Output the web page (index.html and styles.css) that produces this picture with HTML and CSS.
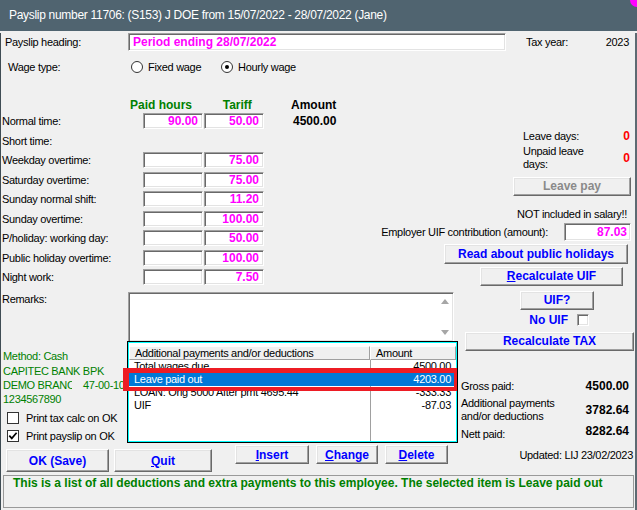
FILE: index.html
```html
<!DOCTYPE html>
<html lang="en">

<head>
    <meta charset="UTF-8">
    <meta name="viewport" content="width=device-width, initial-scale=1.0">
    <title>Payslip</title>
    <link rel="stylesheet" href="styles.css">
</head>

<body>
    <div class="window">
        <div class="titlebar">Payslip number 11706: (S153) J DOE from 15/07/2022 - 28/07/2022 (Jane)</div>

        <div class="form">
            <div class="heading-row">
                <span class="heading-label">Payslip heading:</span>
                <div class="field heading-field">Period ending 28/07/2022</div>
                <span class="tax-label">Tax year:</span>
                <span class="tax-value">2023</span>
            </div>

            <div class="wage-row">
                <span class="wage-label">Wage type:</span>
                <span class="radio-option first"><span class="radio"></span>Fixed wage</span>
                <span class="radio-option"><span class="radio checked"></span>Hourly wage</span>
            </div>

            <div class="main">
                <div class="left-col">
                    <div class="rates">
                        <div class="rates-head">
                            <span></span>
                            <span class="bold green">Paid hours</span>
                            <span class="bold green">Tariff</span>
                            <span class="bold">Amount</span>
                        </div>
                        <div class="rate-row">
                            <span class="rate-label">Normal time:</span>
                            <div class="field num">90.00</div>
                            <div class="field num">50.00</div>
                            <span class="amount">4500.00</span>
                        </div>
                        <div class="rate-row">
                            <span class="rate-label">Short time:</span>
                        </div>
                        <div class="rate-row">
                            <span class="rate-label">Weekday overtime:</span>
                            <div class="field num"></div>
                            <div class="field num">75.00</div>
                        </div>
                        <div class="rate-row">
                            <span class="rate-label">Saturday overtime:</span>
                            <div class="field num"></div>
                            <div class="field num">75.00</div>
                        </div>
                        <div class="rate-row">
                            <span class="rate-label">Sunday normal shift:</span>
                            <div class="field num"></div>
                            <div class="field num">11.20</div>
                        </div>
                        <div class="rate-row">
                            <span class="rate-label">Sunday overtime:</span>
                            <div class="field num"></div>
                            <div class="field num">100.00</div>
                        </div>
                        <div class="rate-row">
                            <span class="rate-label">P/holiday: working day:</span>
                            <div class="field num"></div>
                            <div class="field num">50.00</div>
                        </div>
                        <div class="rate-row">
                            <span class="rate-label">Public holiday overtime:</span>
                            <div class="field num"></div>
                            <div class="field num">100.00</div>
                        </div>
                        <div class="rate-row">
                            <span class="rate-label">Night work:</span>
                            <div class="field num"></div>
                            <div class="field num">7.50</div>
                        </div>
                    </div>

                    <div class="lower">
                        <div class="side">
                            <div class="remarks-label">Remarks:</div>
                            <div class="bank">
                                <div>Method: Cash</div>
                                <div>CAPITEC BANK BPK</div>
                                <div class="branch-line"><span class="branch">DEMO BRANCH</span><span class="branch-code">47-00-10</span></div>
                                <div>1234567890</div>
                            </div>
                            <div class="check-row first">
                                <span class="checkbox"></span>Print tax calc on OK
                            </div>
                            <div class="check-row">
                                <span class="checkbox">
                                    <svg width="12" height="12" viewBox="0 0 12 12"><path d="M2.3 5.6 L4.8 8.4 L9.6 2.8" stroke="#000" stroke-width="1.7" fill="none"/></svg>
                                </span>Print payslip on OK
                            </div>
                        </div>

                        <div class="center">
                            <div class="field remarks">
                                <div class="remarks-text"></div>
                                <div class="scrollbar">
                                    <span class="arrow up"></span>
                                    <span class="arrow down"></span>
                                </div>
                            </div>

                            <div class="list">
                                <div class="list-head">
                                    <span class="head-cell">Additional payments and/or deductions</span>
                                    <span class="head-cell">Amount</span>
                                </div>
                                <div class="list-body">
                                    <div class="list-row"><span>Total wages due</span><span class="val">4500.00</span></div>
                                    <div class="list-row selected"><span>Leave paid out</span><span class="val">4203.00</span></div>
                                    <div class="list-row"><span>LOAN: Orig 5000 After pmt 4695.44</span><span class="val">-333.33</span></div>
                                    <div class="list-row"><span>UIF</span><span class="val">-87.03</span></div>
                                </div>
                                <div class="mark"></div>
                            </div>
                        </div>
                    </div>
                </div>

                <div class="right-col">
                    <div class="leave-row">
                        <span>Leave days:</span>
                        <span class="red">0</span>
                    </div>
                    <div class="leave-row unpaid">
                        <span>Unpaid leave<br>days:</span>
                        <span class="red">0</span>
                    </div>
                    <button class="btn disabled leave-pay">Leave pay</button>
                    <div class="not-included">NOT included in salary!!</div>
                    <div class="uif-contrib">
                        <span>Employer UIF contribution (amount):</span>
                        <div class="field num uif-field">87.03</div>
                    </div>
                    <button class="btn read-btn">Read about public holidays</button>
                    <button class="btn recalc-uif"><u>R</u>ecalculate UIF</button>
                    <button class="btn uif-btn">UIF?</button>
                    <div class="no-uif">
                        <span>No UIF</span>
                        <span class="field small-box"></span>
                    </div>
                    <button class="btn recalc-tax">Recalculate TAX</button>

                    <div class="totals">
                        <span>Gross paid:</span>
                        <span class="bold">4500.00</span>
                        <span class="two-line">Additional payments<br>and/or deductions</span>
                        <span class="bold mid">3782.64</span>
                        <span>Nett paid:</span>
                        <span class="bold nett">8282.64</span>
                    </div>
                </div>
            </div>

            <div class="button-row">
                <button class="btn big ok-btn">OK (Save)</button>
                <button class="btn big quit-btn"><u>Q</u>uit</button>
                <button class="btn insert-btn"><u>I</u>nsert</button>
                <button class="btn change-btn"><u>C</u>hange</button>
                <button class="btn delete-btn"><u>D</u>elete</button>
                <span class="updated">Updated: LIJ 23/02/2023</span>
            </div>

            <div class="status">This is a list of all deductions and extra payments to this employee. The selected item is Leave paid out</div>
        </div>
    </div>
</body>

</html>
```

FILE: styles.css
```css
body {
    margin: 0;
    background: #f0f0f0;
    font-family: "Liberation Sans", Arial, sans-serif;
    font-size: 11px;
    letter-spacing: -0.3px;
    color: #000;
}

.window {
    width: 637px;
    height: 510px;
    background: #f0f0f0;
}

.titlebar {
    position: relative;
    height: 31px;
    line-height: 30px;
    padding-left: 9px;
    background: #506470;
    color: #fff;
    font-size: 12px;
}

.titlebar::after {
    content: "";
    position: absolute;
    top: 0;
    right: 0;
    width: 7px;
    height: 7px;
    background: #ff00ff;
    border-bottom-left-radius: 7px;
}

.form {
    height: 477px;
    border-left: 1px solid #3f4c54;
    border-right: 2px solid #5d6a72;
    border-bottom: 2px solid #5d6a72;
}

.bold {
    font-weight: bold;
    font-size: 12px;
    letter-spacing: 0;
}

.green {
    color: #008000;
}

.red {
    color: #ff0000;
    font-weight: bold;
    font-size: 12px;
    letter-spacing: 0;
}

/* sunken edit box */
.field {
    box-sizing: border-box;
    background: #fff;
    border: 1px solid;
    border-color: #a0a0a0 #fff #fff #a0a0a0;
    box-shadow: inset 1px 1px 0 #696969, inset -1px -1px 0 #e3e3e3;
}

.num {
    width: 60px;
    height: 16px;
    line-height: 14px;
    padding-right: 4px;
    text-align: right;
    color: #ff00ff;
    font-weight: bold;
    font-size: 12px;
    letter-spacing: 0;
}

/* raised button */
.btn {
    box-sizing: border-box;
    height: 19px;
    padding: 0;
    background: #f0f0f0;
    border: 1px solid;
    border-color: #fff #696969 #696969 #fff;
    box-shadow: inset -1px -1px 0 #a0a0a0, inset 1px 1px 0 #e3e3e3;
    font-family: "Liberation Sans", Arial, sans-serif;
    font-weight: bold;
    font-size: 12px;
    color: #0000ff;
    line-height: 16px;
    flex: none;
}

.btn.disabled {
    color: #8a8a8a;
}

.heading-row {
    display: flex;
    align-items: center;
    height: 18px;
    margin-top: 2px;
}

.heading-label {
    width: 123px;
    padding-left: 4px;
}

.heading-field {
    width: 378px;
    height: 18px;
    padding-left: 4px;
    line-height: 16px;
    color: #ff00ff;
    font-weight: bold;
    font-size: 12px;
    letter-spacing: 0;
}

.tax-label {
    margin-left: 20px;
}

.tax-value {
    margin-left: auto;
    margin-right: 6px;
}

.wage-row {
    display: flex;
    align-items: center;
    height: 16px;
    margin-top: 8px;
}

.wage-label {
    width: 123px;
    padding-left: 7px;
}

.radio-option {
    display: flex;
    align-items: center;
    gap: 5px;
}

.radio-option.first {
    width: 90px;
}

.radio {
    position: relative;
    box-sizing: border-box;
    width: 12px;
    height: 12px;
    border-radius: 50%;
    border: 1px solid #333;
    background: #fff;
}

.radio.checked::after {
    content: "";
    position: absolute;
    left: 3px;
    top: 3px;
    width: 4px;
    height: 4px;
    border-radius: 50%;
    background: #000;
}

.main {
    display: flex;
    height: 369px;
}

.left-col {
    flex: none;
    width: 457px;
}

.rates {
    padding-top: 23px;
}

.rates-head {
    display: grid;
    grid-template-columns: 129px 92.7px 68.3px auto;
    height: 15.3px;
    line-height: 14px;
}

.rate-row {
    display: grid;
    grid-template-columns: 142px 61px 60px auto;
    align-items: start;
    height: 19.5px;
}

.rate-label {
    padding-left: 1px;
    line-height: 16px;
    white-space: nowrap;
}

.amount {
    margin-left: 29px;
    line-height: 16px;
    font-weight: bold;
    font-size: 12px;
    letter-spacing: 0;
}

.lower {
    display: flex;
    margin-top: 3px;
}

.side {
    flex: none;
    width: 126px;
    overflow: hidden;
    white-space: nowrap;
}

.remarks-label {
    padding-left: 1px;
    line-height: 14px;
}

.bank {
    margin-top: 43.5px;
    padding-left: 2px;
    line-height: 14.3px;
    color: #008000;
}

.branch-line {
    display: flex;
}

.branch {
    flex: none;
    width: 69px;
    overflow: hidden;
}

.branch-code {
    margin-left: 11px;
}

.check-row {
    display: flex;
    align-items: center;
    gap: 7px;
    height: 18px;
    padding-left: 6px;
}

.check-row.first {
    margin-top: 2.5px;
}

.checkbox {
    box-sizing: border-box;
    width: 12px;
    height: 12px;
    border: 1px solid #333;
    background: #fff;
}

.checkbox svg {
    display: block;
    margin: -1px;
}

.center {
    flex: none;
    width: 331px;
}

.remarks {
    display: flex;
    width: 326px;
    height: 50px;
    margin-left: 1px;
}

.remarks-text {
    flex: 1;
}

.scrollbar {
    display: flex;
    flex-direction: column;
    justify-content: space-between;
    align-items: center;
    width: 16px;
    padding: 6px 0;
    box-sizing: border-box;
}

.arrow {
    width: 0;
    height: 0;
    border-left: 4px solid transparent;
    border-right: 4px solid transparent;
}

.arrow.up {
    border-bottom: 5px solid #a6a6a6;
}

.arrow.down {
    border-top: 5px solid #a6a6a6;
}

.list {
    position: relative;
    display: flex;
    flex-direction: column;
    box-sizing: border-box;
    width: 331px;
    height: 102px;
    margin-top: -1px;
    padding: 4px 1px 1px 1px;
    background: #fff;
    border: 1px solid #000;
    box-shadow: inset 0 0 0 1px #00ffff;
}

.list-head {
    display: grid;
    grid-template-columns: 241px 86px;
}

.head-cell {
    box-sizing: border-box;
    height: 14px;
    padding-left: 5px;
    line-height: 12px;
    background: #f0f0f0;
    border: 1px solid;
    border-color: #fff #a0a0a0 #a0a0a0 #fff;
    white-space: nowrap;
}

.list-body {
    flex: 1;
    background: linear-gradient(to right, transparent 241px, #a0a0a0 241px, #a0a0a0 242px, transparent 242px);
}

.list-row {
    display: grid;
    grid-template-columns: 241px 86px;
    height: 13px;
    line-height: 13px;
    white-space: nowrap;
}

.list-row span {
    padding-left: 5px;
}

.list-row .val {
    padding-right: 5px;
    text-align: right;
}

.list-row.selected {
    background: #0078d7;
    color: #fff;
}

.mark {
    position: absolute;
    left: -5px;
    top: 26px;
    box-sizing: border-box;
    width: 334px;
    height: 23px;
    border: solid #ed1c24;
    border-width: 5px 3px 4px 6px;
}

.right-col {
    flex: none;
    width: 177px;
    min-width: 0;
    display: flex;
    flex-direction: column;
    align-items: flex-end;
    white-space: nowrap;
}

.right-col > * {
    flex: none;
}

.leave-row {
    display: flex;
    justify-content: space-between;
    align-items: center;
    width: 107px;
    margin-top: 55px;
    margin-right: 5px;
    line-height: 13px;
}

.leave-row.unpaid {
    margin-top: 2px;
    line-height: 13.3px;
}

.leave-pay {
    width: 118px;
    margin-top: 5.4px;
    margin-right: 4px;
}

.not-included {
    margin-top: 11.8px;
    margin-right: 8px;
    line-height: 13px;
}

.uif-contrib {
    display: flex;
    align-items: center;
    gap: 16px;
    height: 18px;
    margin-top: 2.2px;
    margin-right: 4px;
}

.uif-field {
    width: 67px;
    height: 18px;
    line-height: 16px;
    padding-right: 3px;
}

.read-btn {
    width: 184px;
    height: 20px;
    margin-top: 3px;
    margin-right: 7px;
}

.recalc-uif {
    width: 143px;
    margin-top: 3px;
    margin-right: 12px;
}

.uif-btn {
    width: 74px;
    margin-top: 5px;
    margin-right: 41px;
}

.no-uif {
    display: flex;
    align-items: center;
    gap: 9px;
    height: 13px;
    margin-top: 4px;
    margin-right: 46px;
    color: #0000ff;
    font-weight: bold;
    font-size: 12px;
    letter-spacing: 0;
}

.small-box {
    width: 12px;
    height: 12px;
}

.recalc-tax {
    width: 169px;
    margin-top: 5px;
    margin-right: 1px;
}

.totals {
    display: grid;
    grid-template-columns: 1fr auto;
    align-items: center;
    row-gap: 4px;
    width: 168px;
    margin-top: 29px;
    margin-right: 6px;
    line-height: 13px;
}

.two-line {
    line-height: 13.3px;
}

.totals .nett {
    margin-top: -6px;
}

.button-row {
    display: flex;
    align-items: flex-start;
    height: 28px;
}

.btn.big {
    height: 23px;
    margin-top: 5px;
    line-height: 20px;
}

.ok-btn {
    width: 103px;
    margin-left: 5px;
}

.quit-btn {
    width: 98px;
    margin-left: 5px;
}

.insert-btn {
    width: 74px;
    margin-top: 1px;
    margin-left: 23px;
}

.change-btn {
    width: 62px;
    margin-top: 1px;
    margin-left: 7px;
}

.delete-btn {
    width: 63px;
    margin-top: 1px;
    margin-left: 7px;
}

.updated {
    margin-left: auto;
    margin-right: 2px;
    margin-top: 5.2px;
    line-height: 13px;
}

.status {
    box-sizing: border-box;
    height: 33px;
    margin: 3px 1px 0 2px;
    padding-left: 9px;
    line-height: 15px;
    border: 1px solid #9a9a9a;
    color: #008000;
    font-weight: bold;
    font-size: 12px;
    letter-spacing: 0;
    white-space: nowrap;
}
```
